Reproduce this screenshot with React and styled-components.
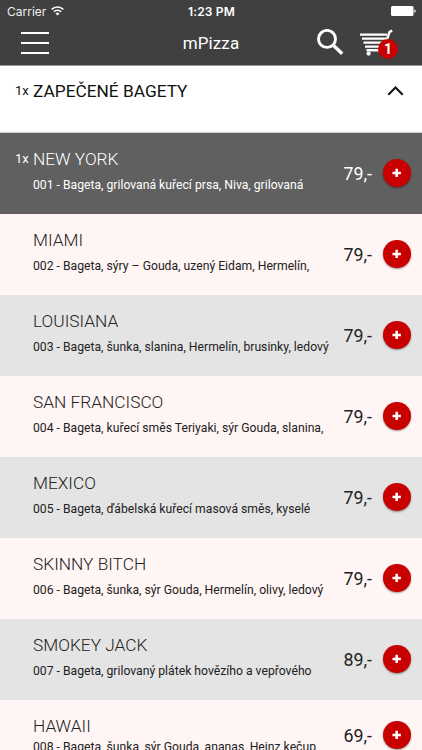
import React from 'react';
import styled, { createGlobalStyle } from 'styled-components';

const GlobalStyle = createGlobalStyle`
  * {
    box-sizing: border-box;
  }
  body {
    margin: 0;
    background: #fff5f4;
    font-family: Roboto, 'Liberation Sans', sans-serif;
  }
`;

const Screen = styled.div`
  width: 422px;
  height: 750px;
  overflow: hidden;
  color: #222;
`;

const Header = styled.header`
  height: 66px;
  background: #404040;
  border-bottom: 1px solid #999;
  color: #fff;
`;

const StatusBar = styled.div`
  display: grid;
  grid-template-columns: 1fr auto 1fr;
  align-items: center;
  height: 22px;
  padding: 0 6px 0 7px;
  font-family: Inter, 'Liberation Sans', sans-serif;
  font-size: 12px;
`;

const Carrier = styled.div`
  display: flex;
  align-items: center;
  gap: 5px;
  color: #eee;
`;

const Clock = styled.div`
  font-weight: 600;
  letter-spacing: 0.15px;
`;

const BatteryIcon = styled.svg`
  justify-self: end;
`;

const NavBar = styled.div`
  display: grid;
  grid-template-columns: 1fr auto 1fr;
  align-items: center;
  height: 42px;
  padding: 0 21px;
`;

const MenuButton = styled.div`
  display: flex;
  flex-direction: column;
  justify-content: space-between;
  width: 28px;
  height: 22px;
  span {
    height: 2px;
    background: #fff;
  }
`;

const Brand = styled.div`
  font-size: 17px;
  letter-spacing: 0.1px;
`;

const Actions = styled.div`
  display: flex;
  justify-content: flex-end;
  align-items: center;
  gap: 16px;
  padding: 0 1px 1px 0;
  svg {
    display: block;
  }
`;

const Cart = styled.div`
  position: relative;
  width: 40px;
`;

const Badge = styled.span`
  position: absolute;
  top: 10px;
  left: 18px;
  width: 20px;
  height: 20px;
  border-radius: 50%;
  background: #c90000;
  font-size: 14px;
  font-weight: 700;
  line-height: 21px;
  text-align: center;
`;

const Category = styled.div`
  display: flex;
  align-items: flex-start;
  height: 67px;
  padding: 13px 18px 0 0;
  background: #fff;
  border-bottom: 1px solid #ccc;
  color: #111;
  svg {
    margin: 7px 0 0 auto;
  }
`;

const Count = styled.span`
  flex: none;
  width: 33px;
  padding-left: 15px;
  font-size: 13px;
  line-height: 24px;
`;

const CategoryName = styled.h1`
  margin: 0;
  font-size: 17.3px;
  font-weight: 400;
  line-height: 24px;
`;

const Row = styled.div`
  display: flex;
  height: ${(props) => (props.$last ? 71 : 81)}px;
  padding: 14px 11px 0 0;
  background: ${(props) => props.$background};
  color: ${(props) => (props.$selected ? '#fff' : '#222')};
`;

const Info = styled.div`
  flex: 1;
  white-space: nowrap;
`;

const Name = styled.h2`
  margin: 0;
  font-size: 17.3px;
  font-weight: 300;
  line-height: 24px;
`;

const Description = styled.p`
  margin: ${(props) => (props.$last ? 0 : 5)}px 0 0;
  font-size: 12.2px;
  line-height: 18px;
`;

const Order = styled.div`
  display: flex;
  align-items: center;
  gap: 11px;
  height: ${(props) => (props.$last ? 42 : 52)}px;
`;

const Price = styled.span`
  font-size: 17.8px;
`;

const AddButton = styled.div`
  display: flex;
  align-items: center;
  justify-content: center;
  width: 28px;
  height: 28px;
  border-radius: 50%;
  background: #c90000;
  box-shadow: 0 1px 2px rgba(0, 0, 0, 0.4);
`;

const WifiIcon = () => (
  <svg width="13" height="10" viewBox="0 0 13 10" fill="none" stroke="#fff">
    <path d="M.7 3.4a8.2 8.2 0 0 1 11.6 0" strokeWidth="1.6" />
    <path d="M2.8 5.7a5.2 5.2 0 0 1 7.4 0" strokeWidth="1.5" />
    <path d="M4.5 7.4a2.9 2.9 0 0 1 4 0l-2 2.1z" fill="#fff" stroke="none" />
  </svg>
);

const SearchIcon = () => (
  <svg width="27" height="27" viewBox="0 0 27 27" fill="none" stroke="#fff">
    <circle cx="10" cy="9.9" r="8.5" strokeWidth="2.9" />
    <path d="M16 16l9.2 8.8" strokeWidth="3.4" />
  </svg>
);

const CartIcon = () => (
  <svg width="34" height="27" viewBox="0 0 34 27" fill="none" stroke="#fff">
    <path d="M0 5.6h27M2 9.6h24M3.5 13.6h21.5M5 17.6h19M6.5 21.2h16" strokeWidth="2.4" />
    <path d="M32.2 1.6l-2.6 1.2-6.3 18" strokeWidth="2.4" />
    <circle cx="8.6" cy="24.6" r="2.1" fill="#fff" stroke="none" />
  </svg>
);

const products = [
  { name: 'NEW YORK', description: '001 - Bageta, grilovaná kuřecí prsa, Niva, grilovaná', price: 79, count: 1 },
  { name: 'MIAMI', description: '002 - Bageta, sýry – Gouda, uzený Eidam, Hermelín,', price: 79 },
  { name: 'LOUISIANA', description: '003 - Bageta, šunka, slanina, Hermelín, brusinky, ledový', price: 79 },
  { name: 'SAN FRANCISCO', description: '004 - Bageta, kuřecí směs Teriyaki, sýr Gouda, slanina,', price: 79 },
  { name: 'MEXICO', description: '005 - Bageta, ďábelská kuřecí masová směs, kyselé', price: 79 },
  { name: 'SKINNY BITCH', description: '006 - Bageta, šunka, sýr Gouda, Hermelín, olivy, ledový', price: 79 },
  { name: 'SMOKEY JACK', description: '007 - Bageta, grilovaný plátek hovězího a vepřového', price: 89 },
  { name: 'HAWAII', description: '008 - Bageta, šunka, sýr Gouda, ananas, Heinz kečup', price: 69 },
];

const rowBackground = (product, index) => {
  if (product.count) {
    return '#606060';
  }
  return index % 2 ? '#fff5f4' : '#e4e4e4';
};

const Product = ({ product, index, last }) => (
  <Row $background={rowBackground(product, index)} $selected={!!product.count} $last={last}>
    <Count>{product.count && `${product.count}x`}</Count>
    <Info>
      <Name>{product.name}</Name>
      <Description $last={last}>{product.description}</Description>
    </Info>
    <Order $last={last}>
      <Price>{product.price},-</Price>
      <AddButton>
        <svg width="10" height="10" viewBox="0 0 10 10" stroke="#fff" strokeWidth="2.5">
          <path d="M4.7.7v8.4M.5 4.9h8.4" />
        </svg>
      </AddButton>
    </Order>
  </Row>
);

const App = () => (
  <>
    <GlobalStyle />
    <Screen>
      <Header>
        <StatusBar>
          <Carrier>
            <span>Carrier</span>
            <WifiIcon />
          </Carrier>
          <Clock>1:23 PM</Clock>
          <BatteryIcon width="25" height="10" viewBox="0 0 25 10" fill="#fff">
            <rect width="22.5" height="10" rx="1.5" />
            <path d="M23.3 3.2q1.4.4 1.4 1.8t-1.4 1.8z" />
          </BatteryIcon>
        </StatusBar>
        <NavBar>
          <MenuButton>
            <span />
            <span />
            <span />
          </MenuButton>
          <Brand>mPizza</Brand>
          <Actions>
            <SearchIcon />
            <Cart>
              <CartIcon />
              <Badge>1</Badge>
            </Cart>
          </Actions>
        </NavBar>
      </Header>
      <Category>
        <Count>1x</Count>
        <CategoryName>ZAPEČENÉ BAGETY</CategoryName>
        <svg width="17" height="10" viewBox="0 0 17 10" fill="none" stroke="#111" strokeWidth="2">
          <path d="M1.3 8.7l7.2-7.2 7.2 7.2" />
        </svg>
      </Category>
      {products.map((product, index) => (
        <Product key={product.name} product={product} index={index} last={index === products.length - 1} />
      ))}
    </Screen>
  </>
);

export default App;
